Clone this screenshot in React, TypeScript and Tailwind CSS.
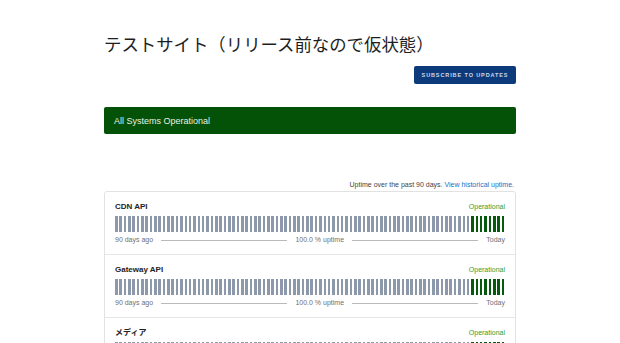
const components = ["CDN API", "Gateway API", "メディア"]

function UptimeBars() {
  const bars = Array.from({ length: 90 }, (_, i) => i >= 82)
  return (
    <div className="flex h-[16px] justify-between">
      {bars.map((green, i) => (
        <div key={i} className={`h-full w-[2.6px] ${green ? "bg-[#055a0c]" : "bg-[#8d99aa]"}`}></div>
      ))}
    </div>
  )
}

function ComponentRow({ name, last }: { name: string; last: boolean }) {
  return (
    <div className={`px-[10px] pt-[10px] pb-[9px] ${last ? "" : "border-b border-[#e6e6e6]"}`}>
      <div className="flex h-[10px] items-center justify-between leading-[10px]">
        <span className="text-[8px] font-bold text-[#222]">{name}</span>
        <span className="text-[7px] text-[#2f9e35]">Operational</span>
      </div>
      <div className="mt-[4px]">
        <UptimeBars />
      </div>
      <div className="mt-[3px] flex h-[10px] items-center text-[7px] leading-[10px] text-[#707070]">
        <span>90 days ago</span>
        <div className="mx-[8px] h-px flex-1 bg-[#b9b9b9]"></div>
        <span>100.0 % uptime</span>
        <div className="mx-[8px] h-px flex-1 bg-[#b9b9b9]"></div>
        <span>Today</span>
      </div>
    </div>
  )
}

export default function App() {
  return (
    <div className="h-[343px] w-[620px] overflow-hidden bg-white font-['Liberation_Sans','Noto_Sans_CJK_JP',sans-serif]">
      <div className="mx-auto flex w-[412px] flex-col pt-[34px]">
        <h1 className="h-[22px] text-[17.4px] leading-[22px] text-[#1e1e1e]">テストサイト（リリース前なので仮状態）</h1>
        <div className="mt-[10px] flex justify-end">
          <button className="h-[18px] w-[102px] rounded-[2px] bg-[#0d3a7a] text-[5.5px] font-bold uppercase tracking-[0.9px] text-[#cfdaec]">
            Subscribe to updates
          </button>
        </div>
        <div className="mt-[23px] flex h-[27px] items-center rounded-[2px] bg-[#035208] pl-[10px] pt-[2px] text-[9px] text-[#e6f2e6]">
          All Systems Operational
        </div>
        <div className="mt-[46px] h-[10px] pr-[2px] text-right text-[7px] leading-[10px] text-[#444]">
          Uptime over the past 90 days. <span className="text-[#1a6fc4]">View historical uptime.</span>
        </div>
        <div className="mt-[1px] rounded-[3px] border border-[#e2e2e2]">
          {components.map((c, i) => (
            <ComponentRow key={c} name={c} last={i === components.length - 1} />
          ))}
        </div>
      </div>
    </div>
  )
}
